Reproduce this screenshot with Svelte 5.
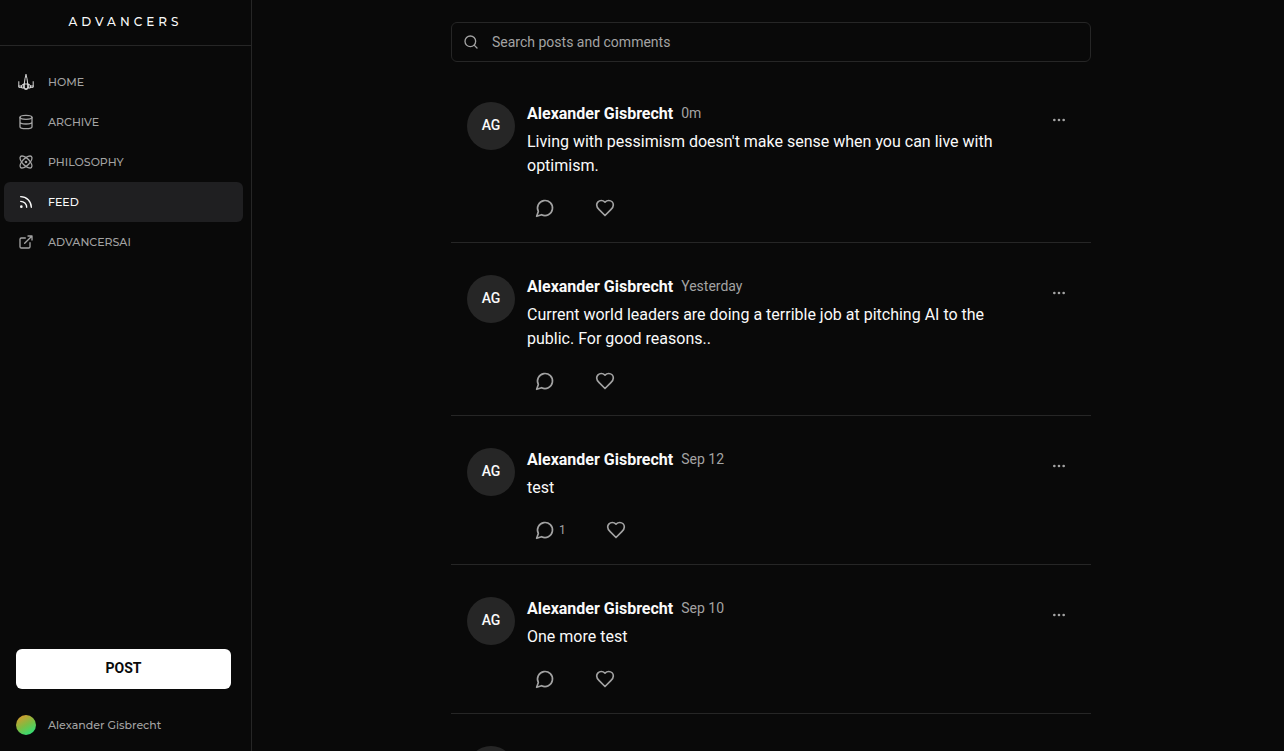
<script>
const links = [
    { label: 'HOME', icon: 'ship' },
    { label: 'ARCHIVE', icon: 'database' },
    { label: 'PHILOSOPHY', icon: 'atom' },
    { label: 'FEED', icon: 'feed', active: true },
    { label: 'ADVANCERSAI', icon: 'external' }
]

const posts = [
    { time: '0m', text: "Living with pessimism doesn't make sense when you can live with optimism.", comments: 0 },
    { time: 'Yesterday', text: 'Current world leaders are doing a terrible job at pitching AI to the public. For good reasons..', comments: 0 },
    { time: 'Sep 12', text: 'test', comments: 1 },
    { time: 'Sep 10', text: 'One more test', comments: 0 }
]

let query = $state('')
</script>

{#snippet navIcon(name)}
    <svg class="nav-icon" class:ship={name === 'ship'} viewBox="0 0 24 24" aria-hidden="true">
        {#if name === 'ship'}
            <path d="M12 1L10.500 7L9.500 14v8h5v-8l-1-7L12 1M9.500 14.500L5.500 17v4h4M14.500 14.500l4 2.500v4h-4M5.500 18H1.200M18.500 18h4.300M1.200 11.500V20h4M22.800 11.500V20h-4M8 15.500v5M16 15.500v5M9.500 15h5M10.500 23h3" />
        {:else if name === 'database'}
            <ellipse cx="12" cy="5" rx="9" ry="3" />
            <path d="M3 5v14a9 3 0 0 0 18 0V5M3 12a9 3 0 0 0 18 0" />
        {:else if name === 'atom'}
            <circle cx="12" cy="12" r="1" />
            <path d="M20.200 20.200c2.040-2.030.02-7.360-4.500-11.900-4.540-4.520-9.870-6.540-11.900-4.500-2.040 2.030-.02 7.360 4.500 11.900 4.540 4.520 9.870 6.540 11.900 4.500Z" />
            <path d="M15.700 15.700c4.520-4.540 6.540-9.870 4.500-11.900-2.030-2.040-7.360-.02-11.900 4.500-4.520 4.540-6.540 9.870-4.500 11.900 2.030 2.040 7.360.02 11.900-4.500Z" />
        {:else if name === 'feed'}
            <path d="M4 11a9 9 0 0 1 9 9M4 4a16 16 0 0 1 16 16" />
            <circle cx="5" cy="19" r="1" />
        {:else}
            <path d="M18 13v6a2 2 0 0 1-2 2H5a2 2 0 0 1-2-2V8a2 2 0 0 1 2-2h6M15 3h6v6M10 14L21 3" />
        {/if}
    </svg>
{/snippet}

<div class="layout">
    <aside class="sidebar">
        <a class="brand" href="#home">ADVANCERS</a>

        <nav class="nav">
            {#each links as link}
                <a class="nav-link" class:active={link.active} href="#{link.label.toLowerCase()}">
                    {@render navIcon(link.icon)}
                    <span class="label">{link.label}</span>
                </a>
            {/each}
        </nav>

        <div class="sidebar-bottom">
            <button class="post-button">POST</button>
            <a class="user" href="#profile">
                <span class="user-dot"></span>
                <span class="label">Alexander Gisbrecht</span>
            </a>
        </div>
    </aside>

    <main>
        <div class="column">
            <label class="search">
                <svg viewBox="0 0 24 24" aria-hidden="true">
                    <circle cx="11" cy="11" r="8" />
                    <path d="M21 21l-4.300-4.300" />
                </svg>
                <input type="text" aria-label="Search" placeholder="Search posts and comments" bind:value={query} />
            </label>

            {#each posts as post}
                <article class="post">
                    <div class="avatar">AG</div>
                    <div class="post-body">
                        <div class="post-head">
                            <span class="author">Alexander Gisbrecht</span>
                            <span class="time">{post.time}</span>
                        </div>
                        <p class="post-text">{post.text}</p>
                        <div class="actions">
                            <button class="action" aria-label="Comment">
                                <svg viewBox="0 0 24 24"><path d="M7.900 20A9 9 0 1 0 4 16.100L2 22Z" /></svg>
                                {#if post.comments}<span>{post.comments}</span>{/if}
                            </button>
                            <button class="action" aria-label="Like">
                                <svg viewBox="0 0 24 24"><path d="M19 14c1.490-1.460 3-3.210 3-5.500A5.500 5.500 0 0 0 16.500 3c-1.760 0-3 .5-4.500 2-1.500-1.500-2.740-2-4.500-2A5.500 5.500 0 0 0 2 8.500c0 2.300 1.500 4.050 3 5.500l7 7Z" /></svg>
                            </button>
                        </div>
                    </div>
                    <button class="more" aria-label="More">
                        <svg viewBox="0 0 24 24">
                            <circle cx="5" cy="12" r="1" />
                            <circle cx="12" cy="12" r="1" />
                            <circle cx="19" cy="12" r="1" />
                        </svg>
                    </button>
                </article>
            {/each}

            <!-- next post, still loading -->
            <div class="post">
                <div class="avatar"></div>
            </div>
        </div>
    </main>
</div>

<style>
:global(body) {
    background-color: #090909;
    color: #fafafa;
    font-family: Roboto, sans-serif;
}

.layout {
    display: flex;
    height: 100vh;
    overflow: hidden;
}

svg {
    display: block;
    flex: none;
    fill: none;
    stroke: currentColor;
    stroke-width: 2;
    stroke-linecap: round;
    stroke-linejoin: round;
}

button {
    border: none;
    background: none;
    font-family: inherit;
    cursor: pointer;
}

a {
    text-decoration: none;
}

.sidebar {
    box-sizing: border-box;
    flex: none;
    display: flex;
    flex-direction: column;
    width: 252px;
    border-right: 1px solid #262626;
    font-family: Montserrat, Inter, sans-serif;
}

.brand {
    display: flex;
    align-items: center;
    justify-content: center;
    height: 43px;
    padding-bottom: 2px;
    border-bottom: 1px solid #262626;
    color: #fafafa;
    font-size: 12px;
    font-weight: 500;
    letter-spacing: 4px;
}

.nav {
    display: flex;
    flex-direction: column;
    padding: 16px 8px 16px 4px;
}

.nav-link {
    display: flex;
    align-items: center;
    gap: 14px;
    height: 40px;
    padding: 0 14px;
    border-radius: 6px;
    color: #a3a3a3;
    font-size: 11px;
    font-weight: 500;
}

.nav-link.active {
    background-color: #1f1f21;
    color: #fafafa;
}

.nav-icon {
    width: 16px;
    height: 16px;
}

.nav-icon.ship {
    color: #e5e5e5;
    stroke-width: 1.4;
}

.label {
    padding-bottom: 1px;
}

.sidebar-bottom {
    display: flex;
    flex-direction: column;
    gap: 16px;
    margin-top: auto;
    padding: 0 20px 6px 16px;
}

.post-button {
    height: 40px;
    padding: 0 0 2px;
    border-radius: 6px;
    background-color: #fff;
    color: #0a0a0a;
    font-family: Roboto, sans-serif;
    font-size: 14px;
    font-weight: 700;
}

.user {
    display: flex;
    align-items: center;
    gap: 12px;
    height: 40px;
    color: #a3a3a3;
    font-size: 11px;
    font-weight: 500;
}

.user-dot {
    width: 20px;
    height: 20px;
    border-radius: 50%;
    background: linear-gradient(150deg, #d69a2d 10%, #7cbd43 50%, #36dc72 85%);
}

main {
    flex: 1;
    padding: 22px 0 0 6px;
}

.column {
    max-width: 640px;
    margin: 0 auto;
}

.search {
    box-sizing: border-box;
    display: flex;
    align-items: center;
    gap: 13px;
    height: 40px;
    margin-bottom: 8px;
    padding: 0 11px;
    border: 1px solid #262626;
    border-radius: 6px;
    color: #a3a3a3;
}

.search svg {
    width: 16px;
    height: 16px;
}

.search input {
    flex: 1;
    padding: 0;
    border: none;
    outline: none;
    background: none;
    color: #fafafa;
    font-family: inherit;
    font-size: 14px;
}

.search input::placeholder {
    color: #a3a3a3;
}

.post {
    display: flex;
    gap: 12px;
    padding: 32px 16px 14px;
    border-bottom: 1px solid #262626;
}

.avatar {
    flex: none;
    width: 48px;
    height: 48px;
    border-radius: 50%;
    background-color: #262626;
    font-size: 14px;
    font-weight: 500;
    line-height: 46px;
    text-align: center;
}

.post-body {
    flex: 1;
}

.post-head {
    display: flex;
    align-items: center;
    gap: 8px;
    height: 22px;
}

.author {
    font-size: 16px;
    font-weight: 700;
}

.time {
    color: #a3a3a3;
    font-size: 14px;
}

.post-text {
    margin: 6px 0 10px;
    font-size: 16px;
    line-height: 24px;
}

.actions {
    display: flex;
    gap: 24px;
}

.action {
    display: flex;
    align-items: center;
    gap: 4px;
    height: 40px;
    padding: 0 8px;
    color: #a3a3a3;
    font-size: 12px;
}

.action svg {
    width: 20px;
    height: 20px;
}

.more {
    display: flex;
    align-items: center;
    justify-content: center;
    width: 32px;
    height: 36px;
    padding: 0;
    color: #a3a3a3;
}

.more svg {
    width: 16px;
    height: 16px;
}
</style>
